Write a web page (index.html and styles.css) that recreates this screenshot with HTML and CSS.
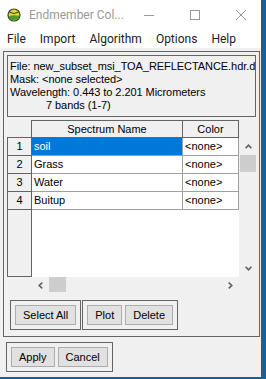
FILE: index.html
```html
<!DOCTYPE html>
<html lang="en">
<head>
    <meta charset="utf-8" />
    <title>Endmember Collection</title>
    <link rel="stylesheet" href="styles.css">
</head>
<body>
    <div class="window">
        <div class="titlebar">
            <svg class="app-icon" width="14" height="14" viewBox="0 0 14 14">
                <circle cx="7" cy="7" r="6" fill="#e4d43c" stroke="#2f4a1c" stroke-width="1.2" />
                <path d="M1.6 8.6 Q5 6.4 12.4 7.8 L11.8 10.2 Q8 13 3.2 11.4 Z" fill="#4d9a2a" />
                <path d="M2.4 4.2 Q7 7 11.6 4" fill="none" stroke="#2f4a1c" stroke-width="1" />
            </svg>
            <span class="title">Endmember Col...</span>
            <div class="caption">
                <span class="caption-btn">
                    <svg width="10" height="10" viewBox="0 0 10 10"><line x1="0" y1="5.5" x2="10" y2="5.5" stroke="#999" /></svg>
                </span>
                <span class="caption-btn">
                    <svg width="10" height="10" viewBox="0 0 10 10"><rect x="0.5" y="0.5" width="9" height="9" fill="none" stroke="#999" /></svg>
                </span>
                <span class="caption-btn">
                    <svg width="10" height="10" viewBox="0 0 10 10"><path d="M0 0 L10 10 M10 0 L0 10" stroke="#999" /></svg>
                </span>
            </div>
        </div>

        <div class="menubar">
            <span class="menu-item">File</span>
            <span class="menu-item">Import</span>
            <span class="menu-item">Algorithm</span>
            <span class="menu-item">Options</span>
            <span class="menu-item">Help</span>
        </div>

        <div class="client">
            <div class="panel">
                <div class="info">
                    <div>File: new_subset_msi_TOA_REFLECTANCE.hdr.dat</div>
                    <div>Mask: &lt;none selected&gt;</div>
                    <div>Wavelength: 0.443 to 2.201 Micrometers</div>
                    <div class="bands">7 bands (1-7)</div>
                </div>

                <div class="grid">
                    <div class="grid-head">
                        <div class="corner"></div>
                        <div class="col-head col-name">Spectrum Name</div>
                        <div class="col-head col-color">Color</div>
                    </div>
                    <div class="grid-mid">
                        <div class="grid-table">
                            <div class="row-heads">
                                <div class="row-head">1</div>
                                <div class="row-head">2</div>
                                <div class="row-head">3</div>
                                <div class="row-head">4</div>
                            </div>
                            <div class="cells">
                                <div class="row">
                                    <div class="cell cell-name selected">soil</div>
                                    <div class="cell cell-color">&lt;none&gt;</div>
                                </div>
                                <div class="row">
                                    <div class="cell cell-name">Grass</div>
                                    <div class="cell cell-color">&lt;none&gt;</div>
                                </div>
                                <div class="row">
                                    <div class="cell cell-name">Water</div>
                                    <div class="cell cell-color">&lt;none&gt;</div>
                                </div>
                                <div class="row">
                                    <div class="cell cell-name">Buitup</div>
                                    <div class="cell cell-color">&lt;none&gt;</div>
                                </div>
                            </div>
                        </div>
                        <div class="vscroll">
                            <div class="scroll-btn">
                                <svg width="7" height="5" viewBox="0 0 7 5"><polyline points="0.6,4.3 3.5,1.2 6.4,4.3" fill="none" stroke="#606060" stroke-width="1.6" /></svg>
                            </div>
                            <div class="thumb"></div>
                            <div class="track"></div>
                            <div class="scroll-btn">
                                <svg width="7" height="5" viewBox="0 0 7 5"><polyline points="0.6,0.7 3.5,3.8 6.4,0.7" fill="none" stroke="#606060" stroke-width="1.6" /></svg>
                            </div>
                        </div>
                    </div>
                    <div class="hscroll">
                        <div class="scroll-btn">
                            <svg width="5" height="7" viewBox="0 0 5 7"><polyline points="4.3,0.6 1.2,3.5 4.3,6.4" fill="none" stroke="#606060" stroke-width="1.6" /></svg>
                        </div>
                        <div class="thumb"></div>
                        <div class="track"></div>
                        <div class="scroll-btn">
                            <svg width="5" height="7" viewBox="0 0 5 7"><polyline points="0.7,0.6 3.8,3.5 0.7,6.4" fill="none" stroke="#606060" stroke-width="1.6" /></svg>
                        </div>
                    </div>
                </div>

                <div class="actions">
                    <div class="group">
                        <button class="btn">Select All</button>
                    </div>
                    <div class="group">
                        <button class="btn">Plot</button>
                        <button class="btn">Delete</button>
                    </div>
                </div>
            </div>

            <div class="group bottom-group">
                <button class="btn">Apply</button>
                <button class="btn">Cancel</button>
            </div>
        </div>
    </div>
</body>
</html>
```

FILE: styles.css
```css
* {
    margin: 0;
    padding: 0;
    box-sizing: border-box;
}

body {
    width: 266px;
    height: 379px;
    overflow: hidden;
    background: #1a5f96;
    font-family: 'Liberation Sans', Arial, sans-serif;
    font-size: 11px;
    color: #000;
}

.window {
    width: 262px;
    height: 377px;
    background: #f0f0f0;
    border-right: 1px solid #505050;
    display: flex;
    flex-direction: column;
    overflow: hidden;
}

/* title bar */
.titlebar {
    height: 30px;
    background: #fff;
    display: flex;
    align-items: center;
}

.app-icon {
    margin-left: 7px;
    flex-shrink: 0;
}

.title {
    flex: 1;
    margin-left: 8px;
    font-family: Roboto, sans-serif;
    font-size: 12px;
    color: #999;
    white-space: nowrap;
}

.caption {
    display: flex;
    margin-right: -3px;
}

.caption-btn {
    width: 46px;
    height: 30px;
    display: flex;
    align-items: center;
    justify-content: center;
}

/* menu */
.menubar {
    height: 18px;
    background: #fff;
    display: flex;
    align-items: center;
    font-family: Roboto, sans-serif;
    font-size: 12px;
    color: #222;
}

.menu-item {
    padding: 0 7px;
}

/* client area */
.client {
    padding: 3px 0 0 3px;
}

.panel {
    width: 257px;
    height: 286px;
    border: 1px solid #646464;
    padding: 3px;
}

.info {
    height: 62px;
    border: 1px solid #646464;
    padding: 4px 0 0 2px;
    line-height: 13px;
    letter-spacing: -0.06px;
    white-space: nowrap;
    overflow: hidden;
}

.info .bands {
    padding-left: 36px;
}

/* spectrum grid */
.grid {
    margin-top: 3px;
}

.grid-head {
    display: flex;
    height: 17px;
}

.corner {
    width: 24px;
}

.col-head {
    border-top: 1px solid #646464;
    border-left: 1px solid #646464;
    text-align: center;
    line-height: 16px;
}

.col-name {
    width: 151px;
}

.col-color {
    width: 57px;
    border-right: 1px solid #646464;
}

.grid-mid {
    display: flex;
    height: 140px;
}

.grid-table {
    display: flex;
    width: 232px;
    border-top: 1px solid #646464;
}

.row-heads {
    width: 25px;
    border: 1px solid #646464;
    border-top: none;
}

.row-head {
    height: 18px;
    border-bottom: 1px solid #646464;
    text-align: center;
    line-height: 17px;
}

.cells {
    width: 207px;
    background: #fff;
}

.row {
    display: flex;
    height: 18px;
    border-bottom: 1px solid #a0a0a0;
}

.cell {
    height: 17px;
    line-height: 17px;
    padding-left: 2px;
    border-right: 1px solid #a0a0a0;
    white-space: nowrap;
    overflow: hidden;
}

.cell-name {
    width: 151px;
}

.cell-color {
    width: 56px;
}

.cell.selected {
    background: #0078d7;
    color: #fff;
}

/* scrollbars */
.vscroll {
    width: 16px;
    margin-left: 1px;
    display: flex;
    flex-direction: column;
}

.vscroll .scroll-btn {
    height: 18px;
}

.vscroll .thumb {
    height: 17px;
    background: #cdcdcd;
}

.track {
    flex: 1;
}

.hscroll {
    display: flex;
    height: 16px;
    width: 207px;
    margin-left: 25px;
}

.hscroll .scroll-btn {
    width: 17px;
}

.hscroll .thumb {
    width: 17px;
    height: 15px;
    background: #cdcdcd;
}

.scroll-btn {
    display: flex;
    align-items: center;
    justify-content: center;
}

/* buttons */
.actions {
    display: flex;
    gap: 1px;
    margin: 7px 0 0 3px;
}

.group {
    display: flex;
    gap: 3px;
    padding: 4px;
    border: 1px solid #646464;
}

.bottom-group {
    display: inline-flex;
    margin: 5px 0 0 3px;
}

.btn {
    height: 20px;
    padding: 0 7px;
    border: 1px solid #adadad;
    background: #e1e1e1;
    font-family: 'Liberation Sans', Arial, sans-serif;
    font-size: 11px;
    color: #000;
}
```
